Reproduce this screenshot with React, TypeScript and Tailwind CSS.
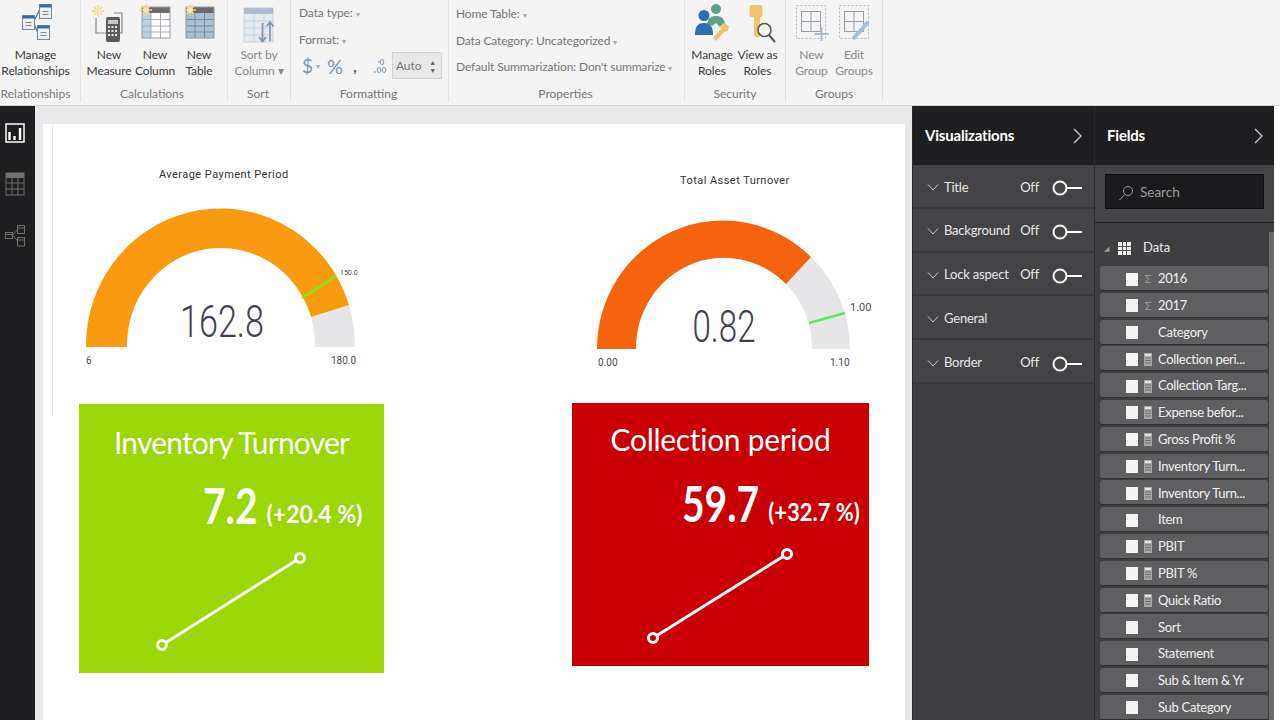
const sans = "font-['Lato','Noto_Sans',sans-serif]";

type RibbonButton = { top: string; bottom: string; icon: React.ReactNode; w: string; dim?: boolean };

function Sun({ x, y }: { x: number; y: number }) {
  return (
    <g stroke="#efd38a" strokeWidth="1.500">
      <path d={`M${x - 6} ${y}h12M${x} ${y - 6}v12M${x - 4} ${y - 4}l8 8M${x + 4} ${y - 4}l-8 8`} />
      <circle cx={x} cy={y} r="3" fill="#f6e7b4" stroke="none" />
    </g>
  );
}

function MiniTable({ x, y }: { x: number; y: number }) {
  return (
    <g>
      <rect x={x} y={y} width="12" height="14" fill="#eef1f4" stroke="#7d8a96" />
      <rect x={x} y={y} width="12" height="3" fill="#3f6f9f" />
      <path d={`M${x + 3} ${y + 7}h6M${x + 3} ${y + 10}h6`} stroke="#7d8a96" />
    </g>
  );
}

function RelationshipsIcon() {
  return (
    <svg width="34" height="40" viewBox="0 0 34 40" fill="none">
      <path d="M15.500 17 L20.500 7M15.500 22 L18.500 29" stroke="#5a7d9a" strokeWidth="1.400" />
      <MiniTable x={3.5} y={12.5} />
      <MiniTable x={20.5} y={1.5} />
      <MiniTable x={18.5} y={22.5} />
    </svg>
  );
}

function MeasureIcon() {
  return (
    <svg width="34" height="40" viewBox="0 0 34 40" fill="none">
      <path d="M4 15v15h10M22 10h8v20h-2" stroke="#8a8a8a" strokeWidth="1.200" />
      <rect x="14" y="14" width="14" height="25" rx="2" fill="#5c5c5c" />
      <rect x="16" y="17" width="10" height="4" fill="#c9c9c9" />
      <path d="M16 24h2M19.500 24h2M23 24h2M16 28h2M19.500 28h2M23 28h2M16 32h2M19.500 32h2M23 32h2" stroke="#e5e5e5" strokeWidth="2" />
      <Sun x={6} y={8} />
    </svg>
  );
}

function TableIcon({ filled }: { filled?: boolean }) {
  return (
    <svg width="34" height="40" viewBox="0 0 34 40" fill="none">
      <rect x="4" y="4" width="28" height="31" fill={filled ? "#a9bfd6" : "#fff"} />
      {!filled && <rect x="4" y="10" width="9" height="25" fill="#bcd0e6" />}
      <rect x="4" y="4" width="28" height="6" fill="#6d6a68" />
      <path d="M4 16.500h28M4 23h28M4 29h28M13 10v25M22.500 10v25" stroke={filled ? "#76889b" : "#a6aeb8"} />
      <rect x="4" y="4" width="28" height="31" stroke="#9a9a9a" />
      <Sun x={8} y={7} />
    </svg>
  );
}

function SortIcon() {
  return (
    <svg width="34" height="40" viewBox="0 0 34 40" fill="none">
      <rect x="2" y="5" width="29" height="34" fill="#e6ebf1" stroke="#ccd3dc" />
      <rect x="2" y="5" width="29" height="6" fill="#aebccd" />
      <path d="M2 18h29M2 25h29M2 32h29M12 11v28M22 11v28" stroke="#ccd3dc" />
      <path d="M20.500 20v18M17 34l3.500 4.500 3.500-4.500M28 38V19M24.500 23.500l3.500-4.500 3.500 4.500" stroke="#8094ab" strokeWidth="1.700" />
    </svg>
  );
}

function RolesIcon() {
  return (
    <svg width="36" height="40" viewBox="0 0 36 40" fill="none">
      <circle cx="22" cy="6" r="5" fill="#5fa08a" />
      <path d="M13 21c1-6 4-8 9-8s8 2 9 8l-5 3-4-4-4 3z" fill="#5fa08a" />
      <circle cx="10" cy="12.500" r="5.500" fill="#2f6fb0" />
      <path d="M1 32c0-9 3-12 9-12s9 3 9 12z" fill="#2f6fb0" />
      <path d="M22 38l-3-3 8-9-1-3 4-3 5 3-1 5-4 1z" fill="#ecc56c" />
    </svg>
  );
}

function ViewRolesIcon() {
  return (
    <svg width="36" height="40" viewBox="0 0 36 40" fill="none">
      <rect x="9.500" y="2" width="13" height="12" rx="2" fill="#ecc56c" />
      <path d="M14 13h6v20l-3 2-3-3z" fill="#ecc56c" />
      <circle cx="24.500" cy="27" r="6.500" fill="#f4f4f4" stroke="#555" strokeWidth="1.500" />
      <path d="M29 32l6 7" stroke="#555" strokeWidth="2" />
    </svg>
  );
}

function GroupIcon({ edit }: { edit?: boolean }) {
  return (
    <svg width="36" height="40" viewBox="0 0 36 40" fill="none">
      <rect x={edit ? 3.5 : 2.5} y="2.500" width="29" height="33" stroke="#b5b9bf" strokeDasharray="2 2" />
      <rect x={edit ? 8.5 : 7.5} y="8.500" width="19" height="20" stroke="#9aa0a8" />
      <path d={edit ? "M8.500 18.500h19M18 8.500v20" : "M7.500 18.500h19M17 8.500v20"} stroke="#9aa0a8" />
      {edit ? (
        <path d="M17 36l15-17" stroke="#a9bdd4" strokeWidth="4" />
      ) : (
        <path d="M20.500 31h14M27.500 24v14" stroke="#a9bdd4" strokeWidth="1.800" />
      )}
    </svg>
  );
}

function DecimalIcon() {
  return (
    <svg width="14" height="16" viewBox="0 0 14 16" fill="none" stroke="#8098b0">
      <ellipse cx="9" cy="4" rx="1.800" ry="2.500" />
      <ellipse cx="6" cy="12" rx="1.800" ry="2.500" />
      <ellipse cx="11" cy="12" rx="1.800" ry="2.500" />
      <path d="M1 14h1.500M5 4h1.500" strokeWidth="1.500" />
    </svg>
  );
}

type GroupDef = { label: string; w: string; pad: string; labelPad?: string; buttons: RibbonButton[] };

const groups: GroupDef[] = [
  {
    label: "Relationships",
    w: "w-[81px]",
    pad: "",
    labelPad: "pr-[9px]",
    buttons: [{ top: "Manage", bottom: "Relationships", icon: <RelationshipsIcon />, w: "w-[71px]" }],
  },
  {
    label: "Calculations",
    w: "w-[147px]",
    pad: "pl-[5px]",
    labelPad: "pr-[4px]",
    buttons: [
      { top: "New", bottom: "Measure", icon: <MeasureIcon />, w: "w-[46px]" },
      { top: "New", bottom: "Column", icon: <TableIcon />, w: "w-[46px]" },
      { top: "New", bottom: "Table", icon: <TableIcon filled />, w: "w-[42px]" },
    ],
  },
  {
    label: "Sort",
    w: "w-[63px]",
    pad: "pl-[1px]",
    labelPad: "pr-[2px]",
    buttons: [{ top: "Sort by", bottom: "Column ▾", icon: <SortIcon />, w: "w-[60px]", dim: true }],
  },
];

const lastGroups: GroupDef[] = [
  {
    label: "Security",
    w: "w-[101px]",
    pad: "pl-[5px]",
    buttons: [
      { top: "Manage", bottom: "Roles", icon: <RolesIcon />, w: "w-[44px]" },
      { top: "View as", bottom: "Roles", icon: <ViewRolesIcon />, w: "w-[47px]" },
    ],
  },
  {
    label: "Groups",
    w: "w-[97px]",
    pad: "pl-[5px]",
    buttons: [
      { top: "New", bottom: "Group", icon: <GroupIcon />, w: "w-[41px]", dim: true },
      { top: "Edit", bottom: "Groups", icon: <GroupIcon edit />, w: "w-[44px]", dim: true },
    ],
  },
];

function Group({ label, w, pad = "", labelPad = "", children }: { label: string; w: string; pad?: string; labelPad?: string; children: React.ReactNode }) {
  return (
    <div className={`${w} h-[102px] border-r border-[#e2e2e2] flex flex-col`}>
      <div className={`h-[80px] flex ${pad}`}>{children}</div>
      <div className={`h-[22px] pt-[6px] text-center text-[12px] leading-[16px] text-[#777] ${labelPad}`}>{label}</div>
    </div>
  );
}

function ButtonsGroup({ label, w, pad, labelPad, buttons }: GroupDef) {
  return (
    <Group label={label} w={w} pad={pad} labelPad={labelPad}>
      {buttons.map((b) => (
        <div key={b.bottom + b.top} className={`${b.w} flex flex-col items-center`}>
          <div className="h-[47px] pt-[3px] flex items-start justify-center">{b.icon}</div>
          <div className={`text-center text-[12px] tracking-[-0.1px] leading-[16px] whitespace-nowrap ${b.dim ? "text-[#8a8a8a]" : "text-[#3c3c3c]"}`}>
            {b.top}
            <br />
            {b.bottom}
          </div>
        </div>
      ))}
    </Group>
  );
}

function Caret() {
  return <span className="text-[8px] text-[#aaa]">▾</span>;
}

function Ribbon() {
  return (
    <div className="h-[106px] bg-[#f4f4f4] border-b border-[#d8d8d8] flex">
      {groups.map((g) => (
        <ButtonsGroup key={g.label} {...g} />
      ))}
      <Group label="Formatting" w="w-[158px]" labelPad="pr-[2px]">
        <div className="w-full pl-[8px] text-[12px] tracking-[-0.1px] text-[#777] leading-[16px]">
          <div className="pt-[5px]">Data type: <Caret /></div>
          <div className="pt-[10px]">Format: <Caret /></div>
          <div className="mt-[3px] flex items-center">
            <span className="text-[19px] text-[#8098b0] w-[17px] pl-[3px]">$</span>
            <span className="text-[8px] text-[#aaa] w-[11px]">▾</span>
            <span className="text-[20px] text-[#8098b0] w-[26px]">%</span>
            <span className="text-[16px] font-bold text-[#666] w-[20px]">,</span>
            <span className="w-[19px]"><DecimalIcon /></span>
            <span className="w-[50px] h-[27px] bg-[#e9e9e9] border border-[#d4d4d4] flex items-center justify-between pl-[3px] pr-[5px]">
              Auto
              <span className="flex flex-col text-[7px] leading-[8px] text-[#666]">
                <span>▲</span>
                <span>▼</span>
              </span>
            </span>
          </div>
        </div>
      </Group>
      <Group label="Properties" w="w-[236px]" labelPad="pr-[2px]">
        <div className="w-full pl-[7px] text-[12px] tracking-[-0.15px] text-[#777] leading-[16px] whitespace-nowrap">
          <div className="pt-[6px]">Home Table: <Caret /></div>
          <div className="pt-[10px]">Data Category: Uncategorized <Caret /></div>
          <div className="pt-[9px]">Default Summarization: Don't summarize <Caret /></div>
        </div>
      </Group>
      {lastGroups.map((g) => (
        <ButtonsGroup key={g.label} {...g} />
      ))}
    </div>
  );
}

function ChartIcon() {
  return (
    <svg width="20" height="20" viewBox="0 0 20 20" fill="none">
      <rect x="1" y="1" width="18" height="18" stroke="#fff" strokeWidth="1.500" />
      <path d="M4.500 17V9M9.500 17v-4M15 17V5" stroke="#fff" strokeWidth="2.400" />
    </svg>
  );
}

function DataIcon() {
  return (
    <svg width="20" height="24" viewBox="0 0 20 24" fill="none">
      <rect x="1" y="1" width="18" height="5" fill="#6f6f6f" />
      <rect x="1" y="1" width="18" height="22" stroke="#6f6f6f" />
      <path d="M1 11h18M1 17h18M7 6v17M13 6v17" stroke="#6f6f6f" />
    </svg>
  );
}

function ModelIcon() {
  return (
    <svg width="20" height="22" viewBox="0 0 20 22" fill="none" stroke="#6f6f6f">
      <rect x="0.500" y="7.500" width="7" height="6" />
      <rect x="12.500" y="0.500" width="7" height="8" />
      <rect x="12.500" y="12.500" width="7" height="8.500" />
      <path d="M7.500 10L12.500 5M7.500 10L12.500 16M12.500 3h7M12.500 15h7M.500 9.500h7" />
    </svg>
  );
}

function LeftRail() {
  return (
    <div className="w-[35px] bg-[#1f1f21] flex flex-col items-start pl-[5px] shrink-0 pt-[17px]">
      <ChartIcon />
      <div className="mt-[29px]"><DataIcon /></div>
      <div className="mt-[29px]"><ModelIcon /></div>
    </div>
  );
}

type GaugeProps = {
  w: number;
  h: number;
  fill: string;
  arcPath: string;
  restPath: string;
  target: [number, number, number, number];
  targetColor: string;
  value: string;
  valueX: number;
  valueY: number;
  valueLen: number;
  valueSize: number;
  labels: { x: number; y: number; t: string; size: number }[];
};

function Gauge(p: GaugeProps) {
  return (
    <svg width={p.w} height={p.h} viewBox={`0 0 ${p.w} ${p.h}`} className="block">
      <path d={p.restPath} fill="#e6e5e8" />
      <path d={p.arcPath} fill={p.fill} />
      <line x1={p.target[0]} y1={p.target[1]} x2={p.target[2]} y2={p.target[3]} stroke={p.targetColor} strokeWidth="2.500" />
      <text
        x={p.valueX}
        y={p.valueY}
        textAnchor="middle"
        fontFamily="Roboto, sans-serif"
        fontWeight="300"
        fontSize={p.valueSize}
        fill="#3f4150"
        textLength={p.valueLen}
        lengthAdjust="spacingAndGlyphs"
      >
        {p.value}
      </text>
      {p.labels.map((l) => (
        <text key={l.t} x={l.x} y={l.y} fontFamily="Roboto, sans-serif" fontSize={l.size} fill="#4b4b55">
          {l.t}
        </text>
      ))}
    </svg>
  );
}

function KpiCard(props: {
  cls: string;
  bg: string;
  title: string;
  titleCls: string;
  value: string;
  delta: string;
  deltaCls: string;
  valueCls: string;
  line: [number, number, number, number];
  w: number;
}) {
  return (
    <div className={`${props.cls} flex flex-col text-white`}>
      <div className={props.titleCls}>{props.title}</div>
      <div className={props.valueCls}>
        <span className="inline-block origin-bottom scale-y-[1.25] text-[39px] font-bold">{props.value}</span>
        <span className={`inline-block origin-bottom scale-y-[1.1] -translate-y-[2px] font-bold ml-[9px] ${props.deltaCls}`}>{props.delta}</span>
      </div>
      <svg width={props.w} height="125" viewBox={`0 0 ${props.w} 125`} className="block mt-auto shrink-0" fill="none">
        <line x1={props.line[0]} y1={props.line[1]} x2={props.line[2]} y2={props.line[3]} stroke="#fff" strokeWidth="3" />
        <circle cx={props.line[0]} cy={props.line[1]} r="4.500" fill={props.bg} stroke="#fff" strokeWidth="3" />
        <circle cx={props.line[2]} cy={props.line[3]} r="4.500" fill={props.bg} stroke="#fff" strokeWidth="3" />
      </svg>
    </div>
  );
}

function Canvas() {
  return (
    <div className="flex-1 bg-[#e9e8ea] pt-[18px] pl-[8px] pr-[7px] overflow-hidden">
      <div className="bg-white h-[600px] pl-[36px] flex relative">
        <div className="absolute left-[9px] top-0 h-[293px] w-px bg-[#ececee]" />
        <div className="w-[493px] flex flex-col">
          <div className="pt-[43px] pl-[80px] text-[11px] leading-[16px] text-[#333] tracking-[0.45px] font-['Roboto',sans-serif]">Average Payment Period</div>
          <div className="pl-[1px] pt-[20px]">
            <Gauge
              w={300}
              h={168}
              fill="#f99b11"
              arcPath="M6 144 A134.500 137 0 0 1 269 102 L231 114 A94 97 0 0 0 47 144 Z"
              restPath="M231 114 L269 102 A134.500 137 0 0 1 275 144 L235 144 A94 97 0 0 0 231 114 Z"
              target={[222, 95, 256, 73]}
              targetColor="#7ee81c"
              value="162.8"
              valueX={142}
              valueY={134}
              valueLen={84}
              valueSize={44}
              labels={[
                { x: 6, y: 161, t: "6", size: 10 },
                { x: 260, y: 72, t: "150.0", size: 7 },
                { x: 251, y: 161, t: "180.0", size: 10 },
              ]}
            />
          </div>
          <div className="mt-[33px]">
            <KpiCard
              cls="w-[305px] h-[269px] bg-[#9bd606]"
              bg="#9bd606"
              title="Inventory Turnover"
              titleCls="text-center text-[30px] tracking-[-0.8px] leading-[40px] pt-[18px]"
              value="7.2"
              delta="(+20.4 %)"
              deltaCls="text-[23px]"
              valueCls="pl-[124px] pt-[22px] h-[78px] leading-[56px] whitespace-nowrap"
              line={[83, 97, 221, 10]}
              w={305}
            />
          </div>
        </div>
        <div className="flex flex-col">
          <div className="pt-[49px] pl-[108px] text-[11px] leading-[16px] text-[#333] tracking-[0.45px] font-['Roboto',sans-serif]">Total Asset Turnover</div>
          <div className="pt-[15px]">
            <Gauge
              w={310}
              h={170}
              fill="#f5640c"
              arcPath="M25 145 A126 128 0 0 1 239 53 L214 80 A88 90 0 0 0 64 145 Z"
              restPath="M239 53 A126 128 0 0 1 278 145 L240 145 A88 90 0 0 0 214 80 Z"
              target={[237, 119, 273, 109]}
              targetColor="#5fe85f"
              value="0.82"
              valueX={152}
              valueY={138}
              valueLen={63}
              valueSize={44}
              labels={[
                { x: 26, y: 162, t: "0.00", size: 10 },
                { x: 278, y: 107, t: "1.00", size: 11 },
                { x: 258, y: 162, t: "1.10", size: 10 },
              ]}
            />
          </div>
          <div className="mt-[29px]">
            <KpiCard
              cls="w-[297px] h-[263px] bg-[#c80004]"
              bg="#c80004"
              title="Collection period"
              titleCls="text-center text-[30px] tracking-[-0.3px] leading-[40px] pt-[16px]"
              value="59.7"
              delta="(+32.7 %)"
              deltaCls="text-[22px]"
              valueCls="pl-[110px] pt-[23px] h-[79px] leading-[56px] whitespace-nowrap"
              line={[81, 97, 215, 13]}
              w={297}
            />
          </div>
        </div>
      </div>
    </div>
  );
}

function VizRow({ label, off }: { label: string; off?: boolean }) {
  return (
    <div className="h-[43.800px] pt-[3px] bg-[#444446] border-b-[2px] border-[#39393b] flex items-center pl-[14px] pr-[12px] text-[#e6e6e6] text-[13px] tracking-[-0.2px]">
      <svg width="12" height="12" viewBox="0 0 12 12" fill="none" className="mr-[5px]">
        <path d="M1 3.500l5 5.500 5-5.500" stroke="#c8c8c8" />
      </svg>
      <span className="flex-1 whitespace-nowrap">{label}</span>
      {off && (
        <>
          <span className="mr-[13px]">Off</span>
          <svg width="30" height="18" viewBox="0 0 30 18" fill="none" className="mt-[2px]">
            <circle cx="8" cy="9" r="6.500" stroke="#fff" strokeWidth="2" />
            <path d="M15 9h15" stroke="#fff" strokeWidth="2" />
          </svg>
        </>
      )}
    </div>
  );
}

function Chevron() {
  return (
    <svg width="10" height="16" viewBox="0 0 10 16" fill="none">
      <path d="M1 1l7 7-7 7" stroke="#c8c8c8" strokeWidth="1.300" />
    </svg>
  );
}

function Visualizations() {
  return (
    <div className="w-[182px] bg-[#3f3f41] shrink-0 border-l border-[#2a2a2c]">
      <div className="h-[59px] bg-[#1f1f21] flex items-center justify-between pl-[12px] pr-[11px] text-white text-[15px] tracking-[-0.2px] font-bold">
        Visualizations
        <Chevron />
      </div>
      <VizRow label="Title" off />
      <VizRow label="Background" off />
      <VizRow label="Lock aspect" off />
      <VizRow label="General" />
      <VizRow label="Border" off />
    </div>
  );
}

const fields: { name: string; kind?: "sum" | "calc" }[] = [
  { name: "2016", kind: "sum" },
  { name: "2017", kind: "sum" },
  { name: "Category" },
  { name: "Collection peri...", kind: "calc" },
  { name: "Collection Targ...", kind: "calc" },
  { name: "Expense befor...", kind: "calc" },
  { name: "Gross Profit %", kind: "calc" },
  { name: "Inventory Turn...", kind: "calc" },
  { name: "Inventory Turn...", kind: "calc" },
  { name: "Item" },
  { name: "PBIT", kind: "calc" },
  { name: "PBIT %", kind: "calc" },
  { name: "Quick Ratio", kind: "calc" },
  { name: "Sort" },
  { name: "Statement" },
  { name: "Sub & Item & Yr" },
  { name: "Sub Category" },
];

function FieldRow({ name, kind }: { name: string; kind?: "sum" | "calc" }) {
  return (
    <div className="h-[25px] pt-[2px] mb-[1.800px] ml-[5px] w-[168px] rounded-[3px] bg-[#5f5f61] border-b border-[#303032] flex items-center text-[#f0f0f0] text-[13px] tracking-[-0.3px] whitespace-nowrap overflow-hidden">
      <span className="ml-[26px] w-[12px] h-[13px] bg-[#f4f4f4] shrink-0" />
      <span className="w-[20px] flex justify-center shrink-0">
        {kind === "sum" && <span className="text-[#9b9b9b] text-[11px]">Σ</span>}
        {kind === "calc" && (
          <svg width="8" height="13" viewBox="0 0 8 13">
            <rect width="8" height="13" fill="#a8a8a8" />
            <rect x="1" y="1" width="6" height="2" fill="#e4e4e4" />
            <path d="M1 5h6M1 7.500h6M1 10h6" stroke="#6f6f6f" />
          </svg>
        )}
      </span>
      {name}
    </div>
  );
}

function Fields() {
  return (
    <div className="w-[180px] bg-[#3f3f41] shrink-0 border-l border-[#2a2a2c] relative overflow-hidden">
      <div className="h-[59px] bg-[#1f1f21] flex items-center justify-between pl-[12px] pr-[10px] text-white text-[15px] tracking-[-0.2px] font-bold">
        Fields
        <Chevron />
      </div>
      <div className="h-[58px] bg-[#444446] border-b border-[#1f1f21] pt-[9px] px-[10px]">
        <div className="h-[35px] pt-[2px] bg-[#1b1b1d] border border-[#0e0e0e] flex items-center pl-[12px] text-[13.500px] text-[#9a9a9a]">
          <svg width="16" height="16" viewBox="0 0 16 16" fill="none" className="mr-[6px]">
            <circle cx="10" cy="6" r="4.500" stroke="#9a9a9a" />
            <path d="M6.800 9.500L1.500 15" stroke="#9a9a9a" />
          </svg>
          Search
        </div>
      </div>
      <div className="h-[43px] pt-[7px] flex items-center pl-[9px] text-[#eee] text-[13px]">
        <span className="text-[7px] text-[#999] mr-[9px]">◢</span>
        <svg width="13" height="13" viewBox="0 0 13 13" className="mr-[12px]">
          <rect width="13" height="13" fill="#eee" />
          <path d="M0 4.500h13M0 8.500h13M4.500 0v13M8.500 0v13" stroke="#555" />
        </svg>
        Data
      </div>
      {fields.map((f, i) => (
        <FieldRow key={i} name={f.name} kind={f.kind} />
      ))}
      <div className="absolute right-0 top-[126px] w-[5px] h-[500px] bg-[#6a6a6c]" />
    </div>
  );
}

export default function App() {
  return (
    <div className={`w-[1280px] h-[720px] bg-white overflow-hidden ${sans}`}>
      <Ribbon />
      <div className="flex h-[614px] w-[1274px]">
        <LeftRail />
        <Canvas />
        <Visualizations />
        <Fields />
      </div>
    </div>
  );
}
